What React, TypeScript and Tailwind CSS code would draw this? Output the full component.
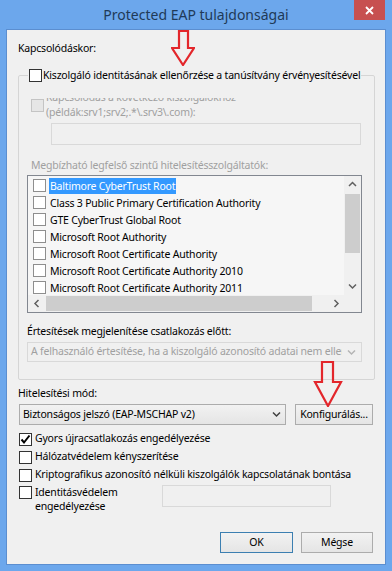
import React from 'react';

function Check({ checked = false, disabled = false, muted = false }: { checked?: boolean; disabled?: boolean; muted?: boolean }) {
  return (
    <span
      className={`flex h-[13px] w-[13px] flex-none items-center justify-center border ${
        disabled ? 'border-[#c4c4c4] bg-[#e6e6e6]' : muted ? 'border-[#8e8e8e] bg-white' : 'border-[#333333] bg-white'
      }`}
    >
      {checked && (
        <svg width="11" height="11" viewBox="0 0 11 11">
          <path d="M1.5 5.5 L4 8.5 L9.5 1.5" fill="none" stroke="#000" strokeWidth="2" />
        </svg>
      )}
    </span>
  );
}

function Chevron({ dir, color = '#606060' }: { dir: 'up' | 'down' | 'left' | 'right'; color?: string }) {
  const d = {
    up: 'M1 5 L4.5 1.5 L8 5',
    down: 'M1 1.5 L4.5 5 L8 1.5',
    left: 'M5.5 1 L2 4.5 L5.5 8',
    right: 'M2.5 1 L6 4.5 L2.5 8',
  }[dir];
  const horiz = dir === 'up' || dir === 'down';
  return (
    <svg width={horiz ? 9 : 8} height={horiz ? 7 : 9} viewBox={horiz ? '0 0 9 7' : '0 0 8 9'}>
      <path d={d} fill="none" stroke={color} strokeWidth="1.5" />
    </svg>
  );
}

function RedArrow({ w, h, shaftL, shaftR, headY, headL, headR }: { w: number; h: number; shaftL: number; shaftR: number; headY: number; headL: number; headR: number }) {
  const tipX = (headL + headR) / 2;
  const pts = `${shaftL},1 ${shaftR},1 ${shaftR},${headY} ${headR},${headY} ${tipX},${h - 1} ${headL},${headY} ${shaftL},${headY}`;
  return (
    <svg width={w} height={h} viewBox={`0 0 ${w} ${h}`}>
      <polygon points={pts} fill="none" stroke="#e3262b" strokeWidth="2.2" strokeLinejoin="miter" />
    </svg>
  );
}

const certs = [
  'Baltimore CyberTrust Root',
  'Class 3 Public Primary Certification Authority',
  'GTE CyberTrust Global Root',
  'Microsoft Root Authority',
  'Microsoft Root Certificate Authority',
  'Microsoft Root Certificate Authority 2010',
  'Microsoft Root Certificate Authority 2011',
];

export default function App() {
  return (
    <div className="relative flex h-[571px] w-[392px] flex-col bg-[#6ca7ec] font-['Noto_Sans',sans-serif] text-[10.5px] tracking-[-0.2px] text-black">
      {/* Title bar */}
      <div className="relative flex h-[29px] items-center justify-center">
        <span className="text-[14px] tracking-normal text-[#1f3a58]">Protected EAP tulajdonságai</span>
        <div className="absolute right-[7px] top-0 flex h-[20px] w-[31px] items-center justify-center bg-[#c75050]">
          <svg width="9" height="9" viewBox="0 0 9 9">
            <path d="M1 1 L8 8 M8 1 L1 8" stroke="#fff" strokeWidth="1.8" />
          </svg>
        </div>
      </div>

      {/* Content */}
      <div className="mx-[6px] flex h-[536px] flex-col border border-[#5b8ed0] bg-[#f0f0f0] pl-[11px]">
        <div className="mt-[10px] leading-[16px]">Kapcsolódáskor:</div>

        <fieldset className="mt-[11px] w-[357px] rounded-[2px] border border-[#d5d5d5] pb-[17px]">
          <legend className="ml-[9px] whitespace-nowrap px-[1px]">
            <span className="flex h-[16px] items-center gap-[1px]">
              <Check />
              <span className="whitespace-nowrap leading-[16px]">Kiszolgáló identitásának ellenőrzése a tanúsítvány érvényesítésével</span>
            </span>
          </legend>

          <div className="ml-[12px] mt-[15px] flex items-start overflow-hidden">
            <div className="mt-[1px]">
              <Check disabled />
            </div>
            <div className="-mt-[8px] ml-[2px] leading-[15px] text-[#a0a0a0]">
              <div>Kapcsolódás a következő kiszolgálókhoz</div>
              <div>(példák:srv1;srv2;.*\.srv3\.com):</div>
            </div>
          </div>

          <div className="ml-[32px] mt-[3px] h-[22px] w-[310px] border border-[#d9d9d9]" />

          <div className="ml-[12px] mt-[12px] leading-[16px] text-[#a0a0a0]">Megbízható legfelső szintű hitelesítésszolgáltatók:</div>

          {/* Certificate list */}
          <div className="ml-[8px] mt-[2px] flex h-[138px] w-[335px] flex-col border border-[#828790] bg-[#f6f6f6]">
            <div className="flex h-[119px]">
              <div className="flex-1 overflow-hidden pt-[1px]">
                {certs.map((c, i) => (
                  <div key={c} className="flex h-[17px] items-center pl-[5px]">
                    <Check muted />
                    <span
                      className={`ml-[3px] h-[16px] whitespace-nowrap px-[1px] leading-[16px] ${
                        i === 0 ? 'bg-[#3399ff] text-white' : ''
                      }`}
                    >
                      {c}
                    </span>
                  </div>
                ))}
              </div>
              <div className="flex w-[17px] flex-col bg-[#f0f0f0]">
                <div className="flex h-[17px] items-center justify-center">
                  <Chevron dir="up" />
                </div>
                <div className="mx-[1px] mt-[1px] h-[59px] bg-[#cdcdcd]" />
                <div className="flex-1" />
                <div className="flex h-[17px] items-center justify-center">
                  <Chevron dir="down" />
                </div>
              </div>
            </div>
            <div className="flex h-[17px]">
              <div className="flex flex-1 bg-[#f0f0f0]">
                <div className="flex w-[17px] items-center justify-center">
                  <Chevron dir="left" />
                </div>
                <div className="my-[1px] ml-[1px] w-[266px] bg-[#cdcdcd]" />
                <div className="flex-1" />
                <div className="flex w-[17px] items-center justify-center">
                  <Chevron dir="right" />
                </div>
              </div>
              <div className="w-[17px] bg-[#f0f0f0]" />
            </div>
          </div>

          <div className="ml-[8px] mt-[10px] leading-[16px]">Értesítések megjelenítése csatlakozás előtt:</div>

          <div className="ml-[8px] mt-[3px] flex h-[20px] w-[335px] items-center border border-[#d9d9d9] bg-[#f0f0f0]">
            <div className="flex-1 overflow-hidden whitespace-nowrap pl-[3px] text-[#a0a0a0]">
              A felhasználó értesítése, ha a kiszolgáló azonosító adatai nem ellenőrizhetők
            </div>
            <div className="flex w-[19px] items-center justify-center">
              <Chevron dir="down" color="#b4b4b4" />
            </div>
          </div>
        </fieldset>

        <div className="mt-[5px] leading-[16px]">Hitelesítési mód:</div>

        <div className="mt-[3px] flex h-[21px] gap-[9px] pl-[1px]">
          <div className="flex w-[267px] items-center border border-[#acacac] bg-gradient-to-b from-[#f2f2f2] to-[#e5e5e5]">
            <div className="flex-1 whitespace-nowrap pl-[3px]">Biztonságos jelszó (EAP-MSCHAP v2)</div>
            <div className="flex w-[17px] items-center justify-center">
              <Chevron dir="down" color="#404040" />
            </div>
          </div>
          <div className="flex w-[78px] items-center justify-center border border-[#acacac] bg-gradient-to-b from-[#f2f2f2] to-[#e5e5e5]">
            Konfigurálás...
          </div>
        </div>

        <div className="mt-[5px] flex h-[18px] items-center gap-[3px] pl-[1px]">
          <Check checked />
          <span>Gyors újracsatlakozás engedélyezése</span>
        </div>
        <div className="flex h-[18px] items-center gap-[3px] pl-[1px]">
          <Check />
          <span>Hálózatvédelem kényszerítése</span>
        </div>
        <div className="flex h-[18px] items-center gap-[3px] pl-[1px]">
          <Check />
          <span>Kriptografikus azonosító nélküli kiszolgálók kapcsolatának bontása</span>
        </div>
        <div className="mt-[1px] flex items-start pl-[1px]">
          <div className="mt-[1px]">
            <Check />
          </div>
          <div className="ml-[3px] w-[127px] leading-[14px]">
            <div>Identitásvédelem</div>
            <div>engedélyezése</div>
          </div>
          <div className="h-[22px] w-[169px] border border-[#d9d9d9]" />
        </div>

        <div className="mt-[19px] flex justify-end gap-[8px] pr-[12px]">
          <div className="flex h-[21px] w-[73px] items-center justify-center border border-[#3c7fb1] bg-gradient-to-b from-[#f2f2f2] to-[#e5e5e5]">
            OK
          </div>
          <div className="flex h-[21px] w-[72px] items-center justify-center border border-[#acacac] bg-gradient-to-b from-[#f2f2f2] to-[#e5e5e5]">
            Mégse
          </div>
        </div>
      </div>

      {/* Annotation arrows */}
      <div className="absolute left-[171px] top-[30px]">
        <RedArrow w={24} h={36} shaftL={8} shaftR={17} headY={18} headL={1} headR={23} />
      </div>
      <div className="absolute left-[313px] top-[361px]">
        <RedArrow w={30} h={46} shaftL={9} shaftR={20} headY={21} headL={2} headR={28} />
      </div>
    </div>
  );
}
